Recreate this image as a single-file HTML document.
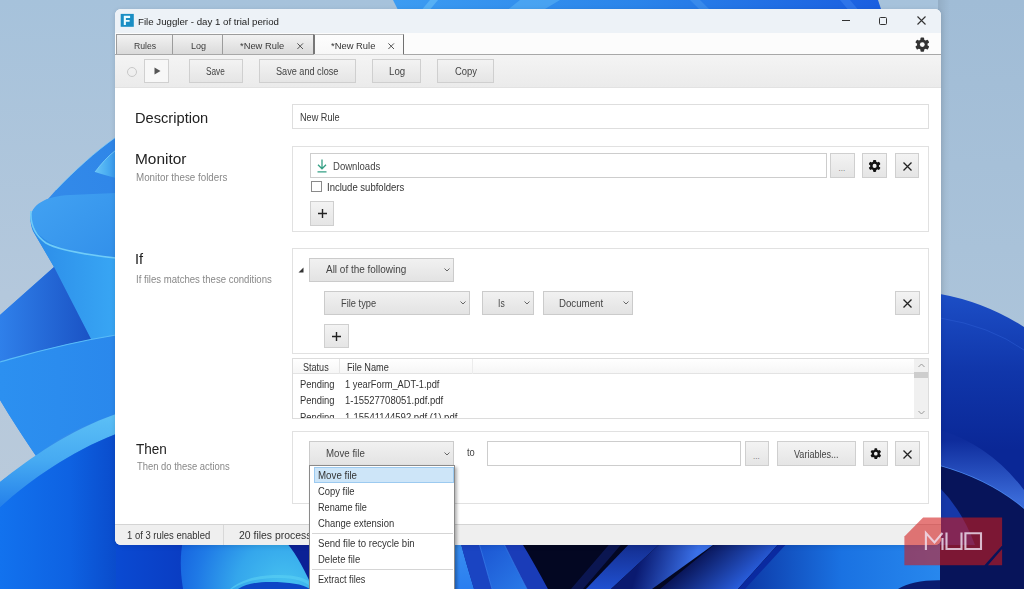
<!DOCTYPE html>
<html><head><meta charset="utf-8">
<style>
*{margin:0;padding:0;box-sizing:border-box}
html,body{width:1024px;height:589px;overflow:hidden;font-family:"Liberation Sans", sans-serif;background:#b3c8dd}
.a{position:absolute;white-space:nowrap}
</style></head><body>
<svg class="a" style="left:0;top:0" width="1024" height="589" viewBox="0 0 1024 589">
<defs>
<linearGradient id="gsky" x1="0" y1="0" x2="0" y2="1"><stop offset="0" stop-color="#a6c2db"/><stop offset=".5" stop-color="#b4c8dc"/><stop offset="1" stop-color="#bccbda"/></linearGradient>
<linearGradient id="gA" x1="1" y1="0" x2="0" y2="1"><stop offset="0" stop-color="#2f86e8"/><stop offset="1" stop-color="#3a92ec"/></linearGradient>
<linearGradient id="gInt" x1="0" y1="0" x2="1" y2="1"><stop offset="0" stop-color="#42a2f2"/><stop offset="1" stop-color="#3290ea"/></linearGradient>
<linearGradient id="gBand" x1="0" y1="0" x2="0" y2="1"><stop offset="0" stop-color="#5cc0f6"/><stop offset=".5" stop-color="#46aaf2"/><stop offset="1" stop-color="#2480ea"/></linearGradient>
<linearGradient id="gCone" x1="0" y1="0" x2="1" y2="0"><stop offset="0" stop-color="#2c8ce8"/><stop offset="1" stop-color="#38a6f4"/></linearGradient>
<linearGradient id="gC" x1="0" y1="0" x2="1" y2="0"><stop offset="0" stop-color="#2f80ea"/><stop offset="1" stop-color="#1a52c4"/></linearGradient>
<linearGradient id="gD" x1="0" y1="0" x2="1" y2="0"><stop offset="0" stop-color="#2c90f0"/><stop offset="1" stop-color="#2a88ec"/></linearGradient>
<linearGradient id="gE" x1="0" y1="0" x2="1" y2="0"><stop offset="0" stop-color="#1272ee"/><stop offset=".6" stop-color="#0e62e2"/><stop offset="1" stop-color="#0a4ccc"/></linearGradient>
<radialGradient id="gBulge" gradientUnits="userSpaceOnUse" cx="285" cy="589" r="110"><stop offset="0" stop-color="#48c4f0"/><stop offset=".45" stop-color="#34a6ec"/><stop offset=".8" stop-color="#1f7ae6"/><stop offset="1" stop-color="#1766e0"/></radialGradient>
<linearGradient id="gBL" x1="0" y1="0" x2="1" y2="0"><stop offset="0" stop-color="#0a4ad2"/><stop offset="1" stop-color="#0a3cc2"/></linearGradient>
<linearGradient id="gTop" x1="0" y1="0" x2="1" y2="0"><stop offset="0" stop-color="#3c9cf2"/><stop offset=".5" stop-color="#2a84ea"/><stop offset="1" stop-color="#1a5ee0"/></linearGradient>
<linearGradient id="gRcap" gradientUnits="userSpaceOnUse" x1="0" y1="294" x2="0" y2="450"><stop offset="0" stop-color="#1c4ec6"/><stop offset=".5" stop-color="#1036aa"/><stop offset="1" stop-color="#0a2796"/></linearGradient>
<linearGradient id="gRband" gradientUnits="userSpaceOnUse" x1="0" y1="440" x2="0" y2="500"><stop offset="0" stop-color="#0e2c9c"/><stop offset="1" stop-color="#3a6ad8"/></linearGradient>
<linearGradient id="gBR" x1="0" y1="0" x2="1" y2="0"><stop offset="0" stop-color="#0d3aa8"/><stop offset=".45" stop-color="#1a72e2"/><stop offset="1" stop-color="#2a8cf0"/></linearGradient>
<linearGradient id="gRsky" x1="0" y1="0" x2="0" y2="1"><stop offset="0" stop-color="#a0bcd6"/><stop offset="1" stop-color="#acc4da"/></linearGradient>
<linearGradient id="gShadow" x1="0" y1="0" x2="1" y2="0"><stop offset="0" stop-color="#000" stop-opacity=".08"/><stop offset="1" stop-color="#000" stop-opacity="0"/></linearGradient>
<linearGradient id="gHl" x1="0" y1="0" x2="1" y2="0"><stop offset="0" stop-color="#68c4f6"/><stop offset=".5" stop-color="#4eb0f2"/><stop offset="1" stop-color="#3696ec"/></linearGradient>
<linearGradient id="gR1" x1="0" y1="0" x2="0" y2="1"><stop offset="0" stop-color="#3a90f0"/><stop offset="1" stop-color="#2a7ef0"/></linearGradient>
<linearGradient id="gR3" x1="0" y1="0" x2="1" y2="1"><stop offset="0" stop-color="#1a52d0"/><stop offset="1" stop-color="#2a7ae8"/></linearGradient>
<linearGradient id="gS1" x1="0" y1="0" x2="0" y2="1"><stop offset="0" stop-color="#122a88"/><stop offset="1" stop-color="#2050d0"/></linearGradient>
<linearGradient id="gS2" gradientUnits="userSpaceOnUse" x1="640" y1="560" x2="690" y2="575"><stop offset="0" stop-color="#0a1a70"/><stop offset="1" stop-color="#3a70e8"/></linearGradient>
<linearGradient id="gS3" gradientUnits="userSpaceOnUse" x1="700" y1="545" x2="740" y2="589"><stop offset="0" stop-color="#050c48"/><stop offset="1" stop-color="#2a60e0"/></linearGradient>
</defs>
<rect width="1024" height="589" fill="url(#gsky)"/>
<!-- LEFT STRIP -->
<path d="M116 137 C95 152 75 170 56 190 L48 199 C38 204 30.5 210 30.5 219 C30.5 224 31.5 228 33 231 L54 267 L0 315 L0 400 C12 420 25 440 36 456 L0 482 L0 589 L116 589 Z" fill="url(#gA)"/>
<path d="M30.5 219 C30.5 205 45 196 70 195 L116 193 L116 258 C105 257 95 256 80 253 C50 248 31 232 30.5 219Z" fill="url(#gInt)"/>
<path d="M95 172 C101 164 108 156 116 150 L116 178 C108 176 101 174 95 172Z" fill="url(#gHl)"/>
<path d="M95 172 C101 164 108 156 116 150" stroke="#7ed2f8" stroke-width="1" fill="none" opacity=".8"/>
<path d="M116 137 C95 152 75 170 56 190" stroke="#86d0f4" stroke-width="1" fill="none" opacity=".7"/>
<path d="M30.5 219 C31 232 50 248 80 253 C95 256 105 257 116 258 L116 335 L92 341 L54 267 L33 231Z" fill="url(#gCone)"/>
<path d="M31 211 C30 225 36 236 46 243 C58 250 80 254 116 258" stroke="#70ccf8" stroke-width="1.6" fill="none"/>
<path d="M0 315 L54 267 L92 341 C55 347 25 355 0 362Z" fill="url(#gC)"/>
<path d="M0 362 C25 355 60 344 116 335 L116 414 C80 426 55 440 36 456 C24 438 12 420 0 400Z" fill="url(#gD)"/>
<path d="M0 362 C25 355 60 344 116 335" stroke="#5abcf8" stroke-width="1.2" fill="none"/>
<path d="M0 482 C30 458 70 430 116 414 L116 434 C70 452 30 480 0 507Z" fill="url(#gBand)"/>
<path d="M0 507 C30 480 70 452 116 434 L116 589 L0 589Z" fill="url(#gE)"/>
<!-- BOTTOM STRIP -->
<rect x="116" y="540" width="70" height="49" fill="url(#gBL)"/>
<path d="M183 540 L310 540 L310 589 L183 589 C180 570 180 555 183 540Z" fill="url(#gBulge)"/>
<path d="M284 540 L310 540 L310 582 C302 565 294 550 284 540Z" fill="#0b2196"/>
<path d="M238 589 C246 584 256 582 270 582 C290 582 302 584 310 589Z" fill="#0d46c6"/>
<path d="M232 589 C246 580 262 578 280 578 C296 578 305 582 310 586 L310 582 C304 578 296 575 280 575 C262 575 246 577 230 589Z" fill="#5ad0f4" opacity=".6"/>
<rect x="454" y="540" width="570" height="49" fill="#0a2a9a"/>
<path d="M454 540 L460 540 C464 556 469 572 474 589 L454 589Z" fill="url(#gR1)"/>
<path d="M460 540 L478 540 C483 556 487 572 492 589 L474 589 C469 572 464 556 460 540Z" fill="#1a44c2"/>
<path d="M478 540 L502 540 C510 556 518 572 527 589 L492 589 C487 572 483 556 478 540Z" fill="url(#gR3)"/>
<path d="M502 540 L520 540 C530 556 539 572 548 589 L527 589 C518 572 510 556 502 540Z" fill="#1a3cb8"/>
<path d="M478 540 C483 556 487 572 492 589" stroke="#3a80ee" stroke-width="1" fill="none" opacity=".7"/>
<path d="M502 540 C510 556 518 572 527 589" stroke="#3a86ee" stroke-width="1" fill="none" opacity=".7"/>
<path d="M520 540 L800 540 L760 589 L548 589 C539 572 530 556 520 540Z" fill="#030722"/>
<path d="M613 540 L625 540 L583 589 L571 589Z" fill="#0e1a5e" opacity=".8"/>
<path d="M633 540 L664 540 L611 589 L586 589Z" fill="url(#gS1)"/>
<path d="M664 540 L720 540 L652 589 L611 589Z" fill="url(#gS2)"/>
<path d="M720 540 L782 540 L738 589 L660 589Z" fill="url(#gS3)"/>
<path d="M782 540 L800 540 L760 589 L738 589Z" fill="#0a2aa0"/>
<path d="M790 540 L960 540 L960 589 L745 589Z" fill="url(#gBR)"/>
<path d="M898 589 C915 579 950 576 988 589Z" fill="#0a1c70"/>
<path d="M958 540 L1024 540 L1024 589 L988 589 C975 570 965 555 958 540Z" fill="#081a78"/>
<!-- RIGHT STRIP -->
<rect x="938" y="0" width="86" height="330" fill="url(#gRsky)"/>
<rect x="938" y="0" width="12" height="330" fill="url(#gShadow)"/>
<path d="M940 294 Q985 302 1024 327 L1024 589 L940 589Z" fill="url(#gRcap)"/>
<path d="M940 318 Q990 326 1024 350" stroke="#2a5ad0" stroke-width="1" fill="none" opacity=".6"/>
<path d="M940 430 Q990 445 1024 490 L1024 509 Q990 480 940 466Z" fill="url(#gRband)"/>
<path d="M940 466 Q990 480 1024 509" stroke="#4a86ee" stroke-width="1.5" fill="none"/>
<path d="M940 466 Q990 480 1024 509 L1024 589 L940 589Z" fill="#07145a"/>
<path d="M940 488 Q962 510 975 545 L940 545Z" fill="#1638a8"/>
<!-- TOP STRIP -->
<path d="M393 0 L878 0 L882 12 L399 12Z" fill="url(#gTop)"/>
<path d="M430 0 L438 0 L428 12 L420 12Z" fill="#6ac0f8" opacity=".6"/>
<path d="M520 0 L560 0 L540 12 L505 12Z" fill="#60b8f6" opacity=".5"/>
<path d="M690 0 L700 0 L712 12 L702 12Z" fill="#4a9af0" opacity=".5"/>
<path d="M840 0 L850 0 L860 12 L850 12Z" fill="#3a80ee" opacity=".6"/>
</svg>

<div class="a" style="left:115px;top:9px;width:826px;height:536px;background:#fff;border-radius:6px;box-shadow:0 1px 5px rgba(0,0,0,.12);"></div>
<div class="a" style="left:115px;top:9px;width:826px;height:24px;background:#edf2f7;border-radius:6px 6px 0 0;"></div>
<div class="a" style="left:115px;top:33px;width:826px;height:22px;background:#fcfcfc;"></div>
<svg class="a" style="left:0;top:0" width="1024" height="589"><rect x="120.7" y="13.9" width="13.1" height="12.9" fill="#1a8ec4"/><path d="M123.8 15.8H130.1V17.9H125.9V19.9H129.6V21.8H125.9V24.9H123.8Z" fill="#eafcff"/></svg>
<div class="a" style="left:137.50px;top:17.02px;font-size:9.9px;line-height:9.9px;color:#222;transform:scaleX(0.9804);transform-origin:0 0;">File Juggler - day 1 of trial period</div>
<div class="a" style="left:842px;top:20px;width:8px;height:1px;background:#333;"></div>
<div class="a" style="left:879px;top:16.5px;width:8px;height:8.0px;border:1.2px solid #333;border-radius:1.5px;"></div>
<svg class="a" style="left:917px;top:16px" width="9" height="9" viewBox="0 0 9 9"><path d="M.5 .5L8.5 8.5M8.5 .5L.5 8.5" stroke="#333" stroke-width="1.1"/></svg>
<div class="a" style="left:116px;top:34px;width:57px;height:21px;background:linear-gradient(#f2f2f2,#d9d9d9);border:1px solid #9c9c9c;border-bottom:none;"></div>
<div class="a" style="left:172px;top:34px;width:51px;height:21px;background:linear-gradient(#f2f2f2,#d9d9d9);border:1px solid #9c9c9c;border-bottom:none;"></div>
<div class="a" style="left:222px;top:34px;width:92px;height:21px;background:linear-gradient(#f2f2f2,#d9d9d9);border:1px solid #9c9c9c;border-bottom:none;"></div>
<div class="a" style="left:313px;top:34px;width:91px;height:21px;background:linear-gradient(#fdfdfd,#f7f7f7);border:1px solid #c0c0c0;border-left:2px solid #777;border-right:1px solid #707070;border-bottom:none;"></div>
<div class="a" style="left:133.50px;top:41.73px;font-size:9.3px;line-height:9.3px;color:#3a3a3a;transform:scaleX(0.9328);transform-origin:0 0;">Rules</div>
<div class="a" style="left:190.60px;top:41.73px;font-size:9.3px;line-height:9.3px;color:#3a3a3a;transform:scaleX(0.9713);transform-origin:0 0;">Log</div>
<div class="a" style="left:240.00px;top:41.73px;font-size:9.3px;line-height:9.3px;color:#3a3a3a;transform:scaleX(1.0057);transform-origin:0 0;">*New Rule</div>
<div class="a" style="left:330.60px;top:41.73px;font-size:9.3px;line-height:9.3px;color:#333;transform:scaleX(1.0103);transform-origin:0 0;">*New Rule</div>
<svg class="a" style="left:297.40000000000003px;top:42.6px" width="6.4" height="6.4" viewBox="0 0 6.4 6.4"><path d="M.4 .4L6 6M6 .4L.4 6" stroke="#505050" stroke-width="1"/></svg>
<svg class="a" style="left:388.2px;top:42.6px" width="6.4" height="6.4" viewBox="0 0 6.4 6.4"><path d="M.4 .4L6 6M6 .4L.4 6" stroke="#505050" stroke-width="1"/></svg>
<svg class="a" style="left:0;top:0" width="1024" height="589"><defs><mask id="gm1"><rect width="1024" height="589" fill="#fff"/><circle cx="922.3" cy="44.6" r="2.41" fill="#000"/></mask></defs><g fill="#333" mask="url(#gm1)"><circle cx="922.3" cy="44.6" r="5.25"/><rect x="920.45" y="37.50" width="3.69" height="14.20" rx="0.92" transform="rotate(0 922.3 44.6)"/><rect x="920.45" y="37.50" width="3.69" height="14.20" rx="0.92" transform="rotate(60 922.3 44.6)"/><rect x="920.45" y="37.50" width="3.69" height="14.20" rx="0.92" transform="rotate(120 922.3 44.6)"/></g></svg>
<div class="a" style="left:115px;top:54px;width:826px;height:34px;background:linear-gradient(#f4f4f4,#ebebeb);border-top:1px solid #a8a8a8;border-bottom:1px solid #e2e2e2;"></div>
<div class="a" style="left:314px;top:54px;width:89px;height:1px;background:#d8d8d8;"></div>
<div class="a" style="left:127px;top:66.5px;width:10px;height:10px;border:1px solid #c8c8c8;border-radius:50%"></div>
<div class="a" style="left:144px;top:58.5px;width:25px;height:24.5px;background:#f7f7f7;border:1px solid #d0d0d0;"></div>
<svg class="a" style="left:154px;top:67px" width="7" height="8" viewBox="0 0 7 8"><path d="M0.5 0.5L6.5 4L0.5 7.5Z" fill="#555"/></svg>
<div class="a" style="left:189px;top:58.5px;width:54px;height:24.5px;background:linear-gradient(#f3f3f3,#e5e5e5);border:1px solid #cfcfcf;"></div>
<div class="a" style="left:206.30px;top:67.23px;font-size:10px;line-height:10px;color:#444;transform:scaleX(0.8265);transform-origin:0 0;">Save</div>
<div class="a" style="left:259px;top:58.5px;width:97px;height:24.5px;background:linear-gradient(#f3f3f3,#e5e5e5);border:1px solid #cfcfcf;"></div>
<div class="a" style="left:275.60px;top:67.23px;font-size:10px;line-height:10px;color:#444;transform:scaleX(0.9126);transform-origin:0 0;">Save and close</div>
<div class="a" style="left:372px;top:58.5px;width:49px;height:24.5px;background:linear-gradient(#f3f3f3,#e5e5e5);border:1px solid #cfcfcf;"></div>
<div class="a" style="left:388.70px;top:67.23px;font-size:10px;line-height:10px;color:#444;transform:scaleX(0.9676);transform-origin:0 0;">Log</div>
<div class="a" style="left:437px;top:58.5px;width:57px;height:24.5px;background:linear-gradient(#f3f3f3,#e5e5e5);border:1px solid #cfcfcf;"></div>
<div class="a" style="left:454.60px;top:67.23px;font-size:10px;line-height:10px;color:#444;transform:scaleX(0.9424);transform-origin:0 0;">Copy</div>
<div class="a" style="left:134.75px;top:110.75px;font-size:14px;line-height:14px;color:#222;transform:scaleX(1.0463);transform-origin:0 0;">Description</div>
<div class="a" style="left:134.68px;top:152.52px;font-size:13.8px;line-height:13.8px;color:#222;transform:scaleX(1.1187);transform-origin:0 0;">Monitor</div>
<div class="a" style="left:136.00px;top:172.83px;font-size:10px;line-height:10px;color:#888;transform:scaleX(0.9788);transform-origin:0 0;">Monitor these folders</div>
<div class="a" style="left:134.85px;top:253.22px;font-size:13.8px;line-height:13.8px;color:#222;transform:scaleX(1.0537);transform-origin:0 0;">If</div>
<div class="a" style="left:136.20px;top:274.74px;font-size:10px;line-height:10px;color:#888;transform:scaleX(0.9581);transform-origin:0 0;">If files matches these conditions</div>
<div class="a" style="left:136.20px;top:442.25px;font-size:14px;line-height:14px;color:#222;transform:scaleX(0.9671);transform-origin:0 0;">Then</div>
<div class="a" style="left:136.60px;top:462.44px;font-size:10px;line-height:10px;color:#888;transform:scaleX(0.9421);transform-origin:0 0;">Then do these actions</div>
<div class="a" style="left:292px;top:104px;width:637px;height:25px;border:1px solid #dedede;background:#fff;"></div>
<div class="a" style="left:299.90px;top:112.73px;font-size:10px;line-height:10px;color:#3a3a3a;transform:scaleX(0.9158);transform-origin:0 0;">New Rule</div>
<div class="a" style="left:292px;top:146px;width:637px;height:86px;border:1px solid #e1e1e1;background:#fff;"></div>
<div class="a" style="left:310px;top:153px;width:517px;height:25px;border:1px solid #cdcdcd;background:#fff;"></div>
<svg class="a" style="left:316px;top:159px" width="12" height="14" viewBox="0 0 12 14"><path d="M6 0.5V9.5M2 5.8L6 9.8L10 5.8M1.5 12.8H10.5" stroke="#35a085" stroke-width="1.3" fill="none"/></svg>
<div class="a" style="left:332.80px;top:161.93px;font-size:10px;line-height:10px;color:#444;transform:scaleX(0.9541);transform-origin:0 0;">Downloads</div>
<div class="a" style="left:830px;top:153px;width:25px;height:25px;background:linear-gradient(#f3f3f3,#e5e5e5);border:1px solid #cfcfcf;"></div>
<div class="a" style="left:838.50px;top:164.93px;font-size:8px;line-height:8px;color:#666;">...</div>
<div class="a" style="left:862px;top:153px;width:25px;height:25px;background:linear-gradient(#f3f3f3,#e5e5e5);border:1px solid #cfcfcf;"></div>
<svg class="a" style="left:0;top:0" width="1024" height="589"><defs><mask id="gm2"><rect width="1024" height="589" fill="#fff"/><circle cx="874.6" cy="165.9" r="2.04" fill="#000"/></mask></defs><g fill="#111" mask="url(#gm2)"><circle cx="874.6" cy="165.9" r="4.44"/><rect x="873.04" y="159.90" width="3.12" height="12.00" rx="0.78" transform="rotate(0 874.6 165.9)"/><rect x="873.04" y="159.90" width="3.12" height="12.00" rx="0.78" transform="rotate(60 874.6 165.9)"/><rect x="873.04" y="159.90" width="3.12" height="12.00" rx="0.78" transform="rotate(120 874.6 165.9)"/></g></svg>
<div class="a" style="left:895px;top:153px;width:24px;height:25px;background:linear-gradient(#f3f3f3,#e5e5e5);border:1px solid #cfcfcf;"></div>
<svg class="a" style="left:902.5px;top:161.5px" width="9" height="9" viewBox="0 0 9 9"><path d="M.5 .5L8.5 8.5M8.5 .5L.5 8.5" stroke="#222" stroke-width="1.3"/></svg>
<div class="a" style="left:311px;top:181px;width:11px;height:11px;border:1px solid #8a8a8a;background:#fff;"></div>
<div class="a" style="left:326.70px;top:182.63px;font-size:10px;line-height:10px;color:#333;transform:scaleX(0.9524);transform-origin:0 0;">Include subfolders</div>
<div class="a" style="left:310px;top:201px;width:24px;height:25px;background:linear-gradient(#f3f3f3,#e5e5e5);border:1px solid #cfcfcf;"></div>
<svg class="a" style="left:317.5px;top:209px" width="9" height="9" viewBox="0 0 9 9"><path d="M4.5 0V9M0 4.5H9" stroke="#222" stroke-width="1.4"/></svg>
<div class="a" style="left:292px;top:248px;width:637px;height:106px;border:1px solid #e1e1e1;background:#fff;"></div>
<svg class="a" style="left:298px;top:267px" width="6" height="6" viewBox="0 0 6 6"><path d="M5.5 .5V5.5H.5Z" fill="#333"/></svg>
<div class="a" style="left:309px;top:258px;width:145px;height:24px;background:linear-gradient(#f1f1f1,#e3e3e3);border:1px solid #cbcbcb;"></div>
<div class="a" style="left:325.50px;top:265.40px;font-size:10.4px;line-height:10.4px;color:#444;transform:scaleX(0.9587);transform-origin:0 0;">All of the following</div>
<svg class="a" style="left:444.3px;top:268.0px" width="6" height="4" viewBox="0 0 6 4"><path d="M.5 .5L3 3L5.5 .5" stroke="#666" stroke-width="1" fill="none"/></svg>
<div class="a" style="left:324px;top:291px;width:146px;height:24px;background:linear-gradient(#f1f1f1,#e3e3e3);border:1px solid #cbcbcb;"></div>
<div class="a" style="left:340.70px;top:298.70px;font-size:10.4px;line-height:10.4px;color:#444;transform:scaleX(0.8939);transform-origin:0 0;">File type</div>
<svg class="a" style="left:460.0px;top:301.0px" width="6" height="4" viewBox="0 0 6 4"><path d="M.5 .5L3 3L5.5 .5" stroke="#666" stroke-width="1" fill="none"/></svg>
<div class="a" style="left:482px;top:291px;width:52px;height:24px;background:linear-gradient(#f1f1f1,#e3e3e3);border:1px solid #cbcbcb;"></div>
<div class="a" style="left:498.10px;top:298.60px;font-size:10.4px;line-height:10.4px;color:#444;transform:scaleX(0.8242);transform-origin:0 0;">Is</div>
<svg class="a" style="left:524.2px;top:301.0px" width="6" height="4" viewBox="0 0 6 4"><path d="M.5 .5L3 3L5.5 .5" stroke="#666" stroke-width="1" fill="none"/></svg>
<div class="a" style="left:543px;top:291px;width:90px;height:24px;background:linear-gradient(#f1f1f1,#e3e3e3);border:1px solid #cbcbcb;"></div>
<div class="a" style="left:558.80px;top:298.60px;font-size:10.4px;line-height:10.4px;color:#444;transform:scaleX(0.9311);transform-origin:0 0;">Document</div>
<svg class="a" style="left:622.5px;top:301.0px" width="6" height="4" viewBox="0 0 6 4"><path d="M.5 .5L3 3L5.5 .5" stroke="#666" stroke-width="1" fill="none"/></svg>
<div class="a" style="left:895px;top:291px;width:25px;height:24px;background:linear-gradient(#f3f3f3,#e5e5e5);border:1px solid #cfcfcf;"></div>
<svg class="a" style="left:903px;top:298.5px" width="9" height="9" viewBox="0 0 9 9"><path d="M.5 .5L8.5 8.5M8.5 .5L.5 8.5" stroke="#222" stroke-width="1.3"/></svg>
<div class="a" style="left:324px;top:324px;width:25px;height:24px;background:linear-gradient(#f3f3f3,#e5e5e5);border:1px solid #cfcfcf;"></div>
<svg class="a" style="left:332px;top:331.5px" width="9" height="9" viewBox="0 0 9 9"><path d="M4.5 0V9M0 4.5H9" stroke="#222" stroke-width="1.4"/></svg>
<div class="a" style="left:292px;top:358px;width:637px;height:61px;border:1px solid #dcdcdc;background:#fff;"></div>
<div class="a" style="left:293px;top:359px;width:621px;height:15px;background:linear-gradient(#fff,#f6f6f6);border-bottom:1px solid #e3e3e3;"></div>
<div class="a" style="left:339px;top:359px;width:1px;height:15px;background:#e6e6e6;"></div>
<div class="a" style="left:472px;top:359px;width:1px;height:15px;background:#ececec;"></div>
<div class="a" style="left:914px;top:359px;width:14px;height:59px;background:#f0f0f0;"></div>
<div class="a" style="left:914px;top:372px;width:14px;height:6px;background:#cdcdcd;"></div>
<svg class="a" style="left:918px;top:363px" width="7" height="5" viewBox="0 0 7 5"><path d="M.5 4L3.5 1L6.5 4" stroke="#999" stroke-width="1" fill="none"/></svg>
<svg class="a" style="left:918px;top:410px" width="7" height="5" viewBox="0 0 7 5"><path d="M.5 1L3.5 4L6.5 1" stroke="#999" stroke-width="1" fill="none"/></svg>
<div class="a" style="left:302.80px;top:362.84px;font-size:10px;line-height:10px;color:#333;transform:scaleX(0.9065);transform-origin:0 0;">Status</div>
<div class="a" style="left:347.40px;top:362.84px;font-size:10px;line-height:10px;color:#333;transform:scaleX(0.9195);transform-origin:0 0;">File Name</div>
<div class="a" style="left:293px;top:375px;width:621px;height:43px;overflow:hidden">
<div class="a" style="left:7.00px;top:4.54px;font-size:10px;line-height:10px;color:#333;transform:scaleX(0.9408);transform-origin:0 0;">Pending</div>
<div class="a" style="left:51.60px;top:4.54px;font-size:10px;line-height:10px;color:#333;transform:scaleX(0.9281);transform-origin:0 0;">1 yearForm_ADT-1.pdf</div>
<div class="a" style="left:7.00px;top:21.23px;font-size:10px;line-height:10px;color:#333;transform:scaleX(0.9408);transform-origin:0 0;">Pending</div>
<div class="a" style="left:51.60px;top:21.23px;font-size:10px;line-height:10px;color:#333;transform:scaleX(0.9494);transform-origin:0 0;">1-15527708051.pdf.pdf</div>
<div class="a" style="left:7.00px;top:37.93px;font-size:10px;line-height:10px;color:#333;transform:scaleX(0.9408);transform-origin:0 0;">Pending</div>
<div class="a" style="left:51.60px;top:37.93px;font-size:10px;line-height:10px;color:#333;transform:scaleX(0.9550);transform-origin:0 0;">1-15541144592.pdf (1).pdf</div>
</div>
<div class="a" style="left:292px;top:431px;width:637px;height:73px;border:1px solid #e1e1e1;background:#fff;"></div>
<div class="a" style="left:309px;top:441px;width:145px;height:25px;background:linear-gradient(#f1f1f1,#e3e3e3);border:1px solid #cbcbcb;"></div>
<div class="a" style="left:325.50px;top:449.10px;font-size:10.4px;line-height:10.4px;color:#444;transform:scaleX(0.9330);transform-origin:0 0;">Move file</div>
<svg class="a" style="left:444.0px;top:451.5px" width="6" height="4" viewBox="0 0 6 4"><path d="M.5 .5L3 3L5.5 .5" stroke="#666" stroke-width="1" fill="none"/></svg>
<div class="a" style="left:466.80px;top:448.04px;font-size:10px;line-height:10px;color:#444;transform:scaleX(0.9341);transform-origin:0 0;">to</div>
<div class="a" style="left:487px;top:441px;width:254px;height:25px;border:1px solid #cdcdcd;background:#fff;"></div>
<div class="a" style="left:745px;top:441px;width:24px;height:25px;background:linear-gradient(#f3f3f3,#e5e5e5);border:1px solid #cfcfcf;"></div>
<div class="a" style="left:753.00px;top:452.93px;font-size:8px;line-height:8px;color:#666;">...</div>
<div class="a" style="left:777px;top:441px;width:79px;height:25px;background:linear-gradient(#f3f3f3,#e5e5e5);border:1px solid #cfcfcf;"></div>
<div class="a" style="left:794.20px;top:449.74px;font-size:10px;line-height:10px;color:#444;transform:scaleX(0.9051);transform-origin:0 0;">Variables...</div>
<div class="a" style="left:863px;top:441px;width:25px;height:25px;background:linear-gradient(#f3f3f3,#e5e5e5);border:1px solid #cfcfcf;"></div>
<svg class="a" style="left:0;top:0" width="1024" height="589"><defs><mask id="gm3"><rect width="1024" height="589" fill="#fff"/><circle cx="875.8" cy="453.7" r="1.84" fill="#000"/></mask></defs><g fill="#111" mask="url(#gm3)"><circle cx="875.8" cy="453.7" r="4.00"/><rect x="874.40" y="448.30" width="2.81" height="10.80" rx="0.70" transform="rotate(0 875.8 453.7)"/><rect x="874.40" y="448.30" width="2.81" height="10.80" rx="0.70" transform="rotate(60 875.8 453.7)"/><rect x="874.40" y="448.30" width="2.81" height="10.80" rx="0.70" transform="rotate(120 875.8 453.7)"/></g></svg>
<div class="a" style="left:895px;top:441px;width:25px;height:25px;background:linear-gradient(#f3f3f3,#e5e5e5);border:1px solid #cfcfcf;"></div>
<svg class="a" style="left:903px;top:449.5px" width="9" height="9" viewBox="0 0 9 9"><path d="M.5 .5L8.5 8.5M8.5 .5L.5 8.5" stroke="#222" stroke-width="1.3"/></svg>
<div class="a" style="left:115px;top:524px;width:826px;height:21px;background:#efefef;border-top:1px solid #d4d4d4;border-radius:0 0 6px 6px;"></div>
<div class="a" style="left:223px;top:525px;width:1px;height:20px;background:#d8d8d8;"></div>
<div class="a" style="left:127.40px;top:530.87px;font-size:10.2px;line-height:10.2px;color:#333;transform:scaleX(0.9296);transform-origin:0 0;">1 of 3 rules enabled</div>
<div class="a" style="left:239.00px;top:530.77px;font-size:10.2px;line-height:10.2px;color:#333;transform:scaleX(1.0249);transform-origin:0 0;">20 files processed</div>
<div class="a" style="left:309px;top:465px;width:146px;height:135px;background:#fff;border:1px solid #8a8a8a;box-shadow:2px 2px 3px rgba(0,0,0,.3);"></div>
<div class="a" style="left:314px;top:466.5px;width:140px;height:16.0px;background:#cde5f8;border:1px solid #9ccaf0;"></div>
<div class="a" style="left:318.30px;top:470.60px;font-size:10.4px;line-height:10.4px;color:#333;transform:scaleX(0.9378);transform-origin:0 0;">Move file</div>
<div class="a" style="left:318.30px;top:487.04px;font-size:10px;line-height:10px;color:#333;transform:scaleX(0.9404);transform-origin:0 0;">Copy file</div>
<div class="a" style="left:318.30px;top:503.44px;font-size:10px;line-height:10px;color:#333;transform:scaleX(0.9145);transform-origin:0 0;">Rename file</div>
<div class="a" style="left:318.30px;top:519.44px;font-size:10px;line-height:10px;color:#333;transform:scaleX(0.9444);transform-origin:0 0;">Change extension</div>
<div class="a" style="left:318.30px;top:539.44px;font-size:10px;line-height:10px;color:#333;transform:scaleX(0.9605);transform-origin:0 0;">Send file to recycle bin</div>
<div class="a" style="left:318.30px;top:555.24px;font-size:10px;line-height:10px;color:#333;transform:scaleX(0.9486);transform-origin:0 0;">Delete file</div>
<div class="a" style="left:318.30px;top:575.13px;font-size:10px;line-height:10px;color:#333;transform:scaleX(0.9172);transform-origin:0 0;">Extract files</div>
<div class="a" style="left:312px;top:533px;width:141px;height:1px;background:#d5d5d5;"></div>
<div class="a" style="left:312px;top:569px;width:141px;height:1px;background:#d5d5d5;"></div>
<svg class="a" style="left:0;top:0" width="1024" height="589"><path d="M904.4 536.6 L923.1 517.4 L1002.1 517.4 L1002.1 545.6 L984.5 565.3 L904.4 565.3Z" fill="rgb(210,25,25)" fill-opacity=".58"/><path d="M1002.1 549 L1002.1 565.3 L988 565.3Z" fill="rgb(210,25,25)" fill-opacity=".58"/><g stroke="#f0e4f4" stroke-opacity=".8" stroke-width="2.1" fill="none"><path d="M925.9 550 V533 L934.5 542.5 L942.5 533 M942.5 538 V550 M946.5 532.5 V549 H961.5 V532.5 M965.4 533.3 H981 V549 H965.4 Z"/></g></svg>
</body></html>
